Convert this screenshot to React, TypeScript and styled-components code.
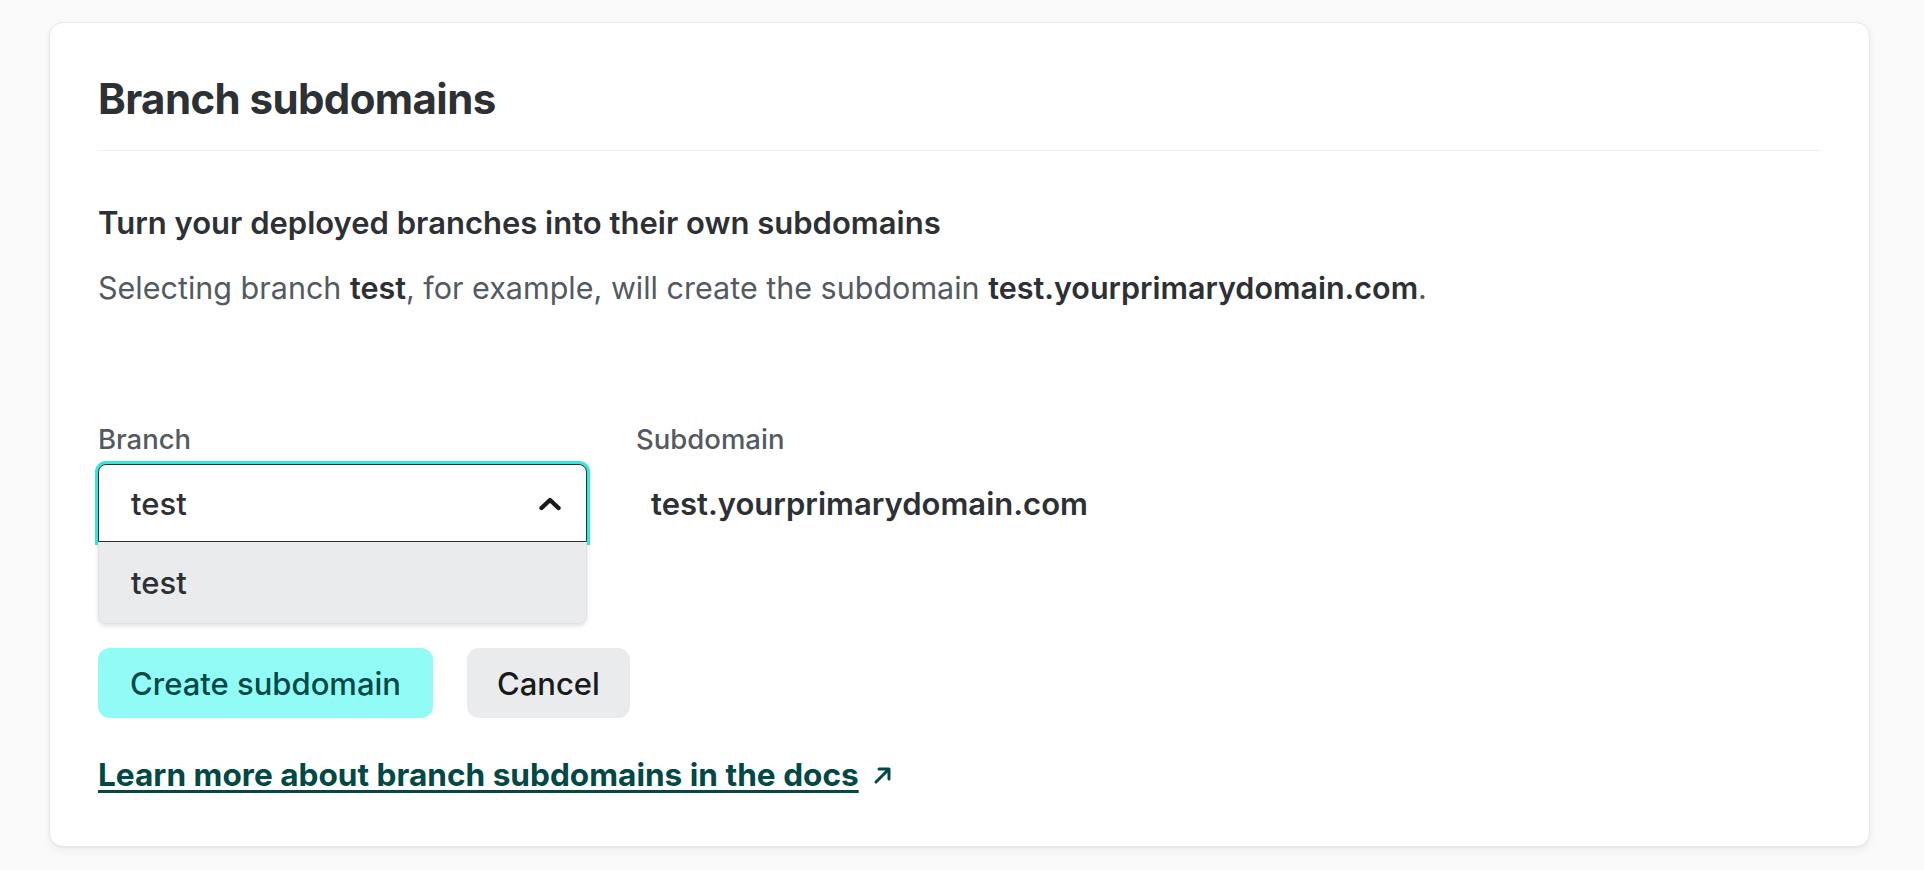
import React from "react";
import styled, { createGlobalStyle } from "styled-components";

const GlobalStyle = createGlobalStyle`
  html, body {
    margin: 0;
    padding: 0;
    background: #fafafa;
  }
  body {
    font-family: Inter, "Noto Sans", "Liberation Sans", sans-serif;
    -webkit-font-smoothing: antialiased;
  }
  * { box-sizing: border-box; }
`;

const Page = styled.div`
  min-height: 870px;
  padding: 22px 54px 23px 49px;
`;

const Card = styled.section`
  background: #ffffff;
  border: 1px solid #e6e8ea;
  border-radius: 14px;
  box-shadow: 0 3px 8px rgba(0, 0, 0, 0.06), 0 1px 2px rgba(0, 0, 0, 0.04);
  padding: 51px 48px 52px 48px;
`;

const Header = styled.header`
  border-bottom: 1px solid #eef0f1;
  padding-bottom: 26px;
`;

const Title = styled.h2`
  margin: 0;
  font-size: 42px;
  line-height: 50px;
  font-weight: 700;
  color: #2d3035;
  letter-spacing: -0.6px;
`;

const Body = styled.div`
  padding-top: 53px;
`;

const SubHeading = styled.h3`
  margin: 0;
  font-size: 31px;
  line-height: 38px;
  font-weight: 600;
  color: #2d3035;
`;

const Paragraph = styled.p`
  margin: 27px 0 0 0;
  font-size: 30.5px;
  line-height: 38px;
  font-weight: 400;
  color: #545a61;

  strong {
    font-weight: 600;
    color: #2d3035;
  }
`;

const FormRow = styled.div`
  display: flex;
  gap: 49px;
  margin-top: 116px;
`;

const Field = styled.div<{ $width?: number }>`
  display: flex;
  flex-direction: column;
  gap: 9px;
  width: ${(p) => (p.$width ? `${p.$width}px` : "auto")};
`;

const Label = styled.label`
  font-size: 27.5px;
  line-height: 32px;
  font-weight: 500;
  color: #545a61;
`;

const SelectWrap = styled.div`
  position: relative;
`;

const SelectButton = styled.div`
  height: 78px;
  border: 1px solid #2d3035;
  border-radius: 8px 8px 0 0;
  box-shadow: 0 0 0 3px #32e6e2;
  background: #ffffff;
  display: flex;
  align-items: center;
  justify-content: space-between;
  padding: 0 24px 0 32px;
  font-size: 31px;
  font-weight: 500;
  color: #2d3035;
`;

const Listbox = styled.ul`
  position: absolute;
  top: 100%;
  left: 0;
  right: 0;
  margin: 0;
  padding: 0;
  list-style: none;
  z-index: 2;
  background: #e9ebed;
  border-radius: 0 0 8px 8px;
  box-shadow: 0 2px 4px rgba(0, 0, 0, 0.12);
  border: 1px solid #dfe1e3;
  border-top: none;
`;

const Option = styled.li`
  height: 81px;
  display: flex;
  align-items: center;
  padding-left: 32px;
  font-size: 31px;
  font-weight: 500;
  color: #2d3035;
`;

const SubdomainValue = styled.div`
  height: 78px;
  display: flex;
  align-items: center;
  padding-left: 15px;
  font-size: 31px;
  font-weight: 600;
  color: #2d3035;
`;

const Actions = styled.div`
  display: flex;
  gap: 34px;
  margin-top: 106px;
`;

const Button = styled.button<{ $primary?: boolean }>`
  height: 70px;
  border: none;
  border-radius: 12px;
  padding: 0 ${(p) => (p.$primary ? 32 : 30)}px;
  font-family: inherit;
  font-size: 31px;
  font-weight: 500;
  cursor: pointer;
  background: ${(p) => (p.$primary ? "#91fbf5" : "#e9ebed")};
  color: ${(p) => (p.$primary ? "#014847" : "#181a1c")};
`;

const DocsLink = styled.a`
  display: inline-flex;
  align-items: center;
  gap: 12px;
  margin-top: 38px;
  font-size: 31.6px;
  line-height: 38px;
  font-weight: 700;
  color: #014847;
  text-decoration: none;

  span {
    text-decoration: underline;
    text-decoration-thickness: 3px;
    text-underline-offset: 4px;
  }
`;

const ChevronUp = () => (
  <svg width="24" height="15" viewBox="0 0 24 15" aria-hidden="true">
    <path d="M3.5 12 L12 4 L20.5 12" fill="none" stroke="#181a1c" strokeWidth="4.4" strokeLinecap="round" strokeLinejoin="round" />
  </svg>
);

const ArrowUpRight = () => (
  <svg width="24" height="24" viewBox="0 0 24 24" aria-hidden="true">
    <path d="M5 19 L18 6 M8 6 H18 V16" fill="none" stroke="#014847" strokeWidth="3" strokeLinecap="round" strokeLinejoin="round" />
  </svg>
);

export default function App() {
  return (
    <>
      <GlobalStyle />
      <Page>
        <Card>
          <Header>
            <Title>Branch subdomains</Title>
          </Header>
          <Body>
            <SubHeading>Turn your deployed branches into their own subdomains</SubHeading>
            <Paragraph>
              Selecting branch <strong>test</strong>, for example, will create the subdomain{" "}
              <strong>test.yourprimarydomain.com</strong>.
            </Paragraph>
            <FormRow>
              <Field $width={489}>
                <Label>Branch</Label>
                <SelectWrap>
                  <SelectButton>
                    <span>test</span>
                    <ChevronUp />
                  </SelectButton>
                  <Listbox>
                    <Option>test</Option>
                  </Listbox>
                </SelectWrap>
              </Field>
              <Field>
                <Label>Subdomain</Label>
                <SubdomainValue>test.yourprimarydomain.com</SubdomainValue>
              </Field>
            </FormRow>
            <Actions>
              <Button $primary>Create subdomain</Button>
              <Button>Cancel</Button>
            </Actions>
            <DocsLink href="#">
              <span>Learn more about branch subdomains in the docs</span>
              <ArrowUpRight />
            </DocsLink>
          </Body>
        </Card>
      </Page>
    </>
  );
}
